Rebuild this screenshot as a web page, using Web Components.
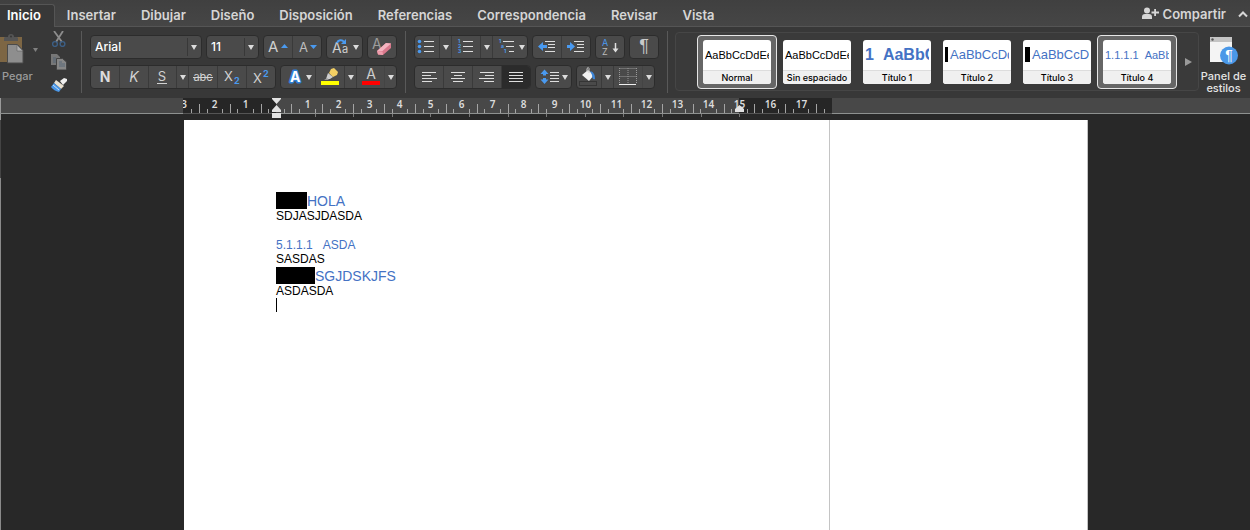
<!DOCTYPE html>
<html lang="es">
<head>
<meta charset="utf-8">
<title>Documento</title>
<style>
  body {
    margin: 0;
    background: #282828;
    font-family: Inter, "Noto Sans", sans-serif;
    color: #dedede;
  }
</style>
</head>
<body>
<word-window>
  <ribbon-tabs slot="tabs">
    <ribbon-tab active>Inicio</ribbon-tab>
    <ribbon-tab>Insertar</ribbon-tab>
    <ribbon-tab>Dibujar</ribbon-tab>
    <ribbon-tab>Diseño</ribbon-tab>
    <ribbon-tab>Disposición</ribbon-tab>
    <ribbon-tab>Referencias</ribbon-tab>
    <ribbon-tab>Correspondencia</ribbon-tab>
    <ribbon-tab>Revisar</ribbon-tab>
    <ribbon-tab>Vista</ribbon-tab>
    <share-button slot="end">Compartir</share-button>
  </ribbon-tabs>

  <clipboard-tools slot="ribbon"></clipboard-tools>

  <ribbon-section slot="ribbon">
    <tool-row>
      <font-select size="wide" label="Fuente" value="Arial"></font-select>
      <font-select size="small" label="Tamaño" value="11"></font-select>
      <tool-group>
        <tool-button icon="grow" label="Aumentar tamaño"></tool-button>
        <tool-button icon="shrink" label="Disminuir tamaño"></tool-button>
      </tool-group>
      <tool-group><tool-button icon="case" label="Mayúsculas"></tool-button></tool-group>
      <tool-group><tool-button icon="eraser" label="Borrar formato"></tool-button></tool-group>
    </tool-row>
    <tool-row>
      <tool-group>
        <tool-button icon="bold" label="Negrita"></tool-button>
        <tool-button icon="italic" label="Cursiva"></tool-button>
        <tool-button icon="underline" label="Subrayado"></tool-button>
        <tool-button icon="arrow" label="Más subrayados"></tool-button>
        <tool-button icon="strike" label="Tachado"></tool-button>
        <tool-button icon="sub" label="Subíndice"></tool-button>
        <tool-button icon="sup" label="Superíndice"></tool-button>
      </tool-group>
      <tool-group>
        <tool-button icon="effects" label="Efectos de texto"></tool-button>
        <tool-button icon="highlight" label="Resaltado"></tool-button>
        <tool-button icon="arrow" label="Color de resaltado"></tool-button>
        <tool-button icon="color" label="Color de fuente"></tool-button>
        <tool-button icon="arrow" flat label="Más colores"></tool-button>
      </tool-group>
    </tool-row>
  </ribbon-section>

  <ribbon-section slot="ribbon">
    <tool-row>
      <tool-group>
        <tool-button icon="bullets" label="Viñetas"></tool-button>
        <tool-button icon="arrow" label="Más viñetas"></tool-button>
        <tool-button icon="numbers" label="Numeración"></tool-button>
        <tool-button icon="arrow" label="Más numeración"></tool-button>
        <tool-button icon="levels" label="Lista multinivel"></tool-button>
      </tool-group>
      <tool-group>
        <tool-button icon="outdent" label="Reducir sangría"></tool-button>
        <tool-button icon="indent" label="Aumentar sangría"></tool-button>
      </tool-group>
      <tool-group><tool-button icon="sort" label="Ordenar"></tool-button></tool-group>
      <tool-group><tool-button icon="pilcrow" label="Mostrar todo"></tool-button></tool-group>
    </tool-row>
    <tool-row>
      <tool-group>
        <tool-button icon="left" label="Alinear a la izquierda"></tool-button>
        <tool-button icon="center" label="Centrar"></tool-button>
        <tool-button icon="right" label="Alinear a la derecha"></tool-button>
        <tool-button icon="justify" pressed label="Justificar"></tool-button>
      </tool-group>
      <tool-group><tool-button icon="spacing" label="Interlineado"></tool-button></tool-group>
      <tool-group>
        <tool-button icon="fill" label="Sombreado"></tool-button>
        <tool-button icon="arrow" label="Más sombreados"></tool-button>
        <tool-button icon="borders" label="Bordes"></tool-button>
        <tool-button icon="arrow" flat label="Más bordes"></tool-button>
      </tool-group>
    </tool-row>
  </ribbon-section>

  <style-gallery slot="ribbon">
    <style-card name="Normal" selected>AaBbCcDdEe</style-card>
    <style-card name="Sin espaciado">AaBbCcDdEe</style-card>
    <style-card name="Título 1" look="title" number="1">AaBbCc</style-card>
    <style-card name="Título 2" look="heading" bar="thin">AaBbCcDdEe</style-card>
    <style-card name="Título 3" look="heading" bar="thick">AaBbCcD</style-card>
    <style-card name="Título 4" look="minor" number="1.1.1.1" selected>AaBbCc</style-card>
  </style-gallery>

  <styles-pane slot="ribbon">Panel de estilos</styles-pane>

  <doc-ruler slot="ruler"></doc-ruler>

  <doc-page slot="page">
    <doc-line kind="heading" block="short">HOLA</doc-line>
    <doc-line>SDJASJDASDA</doc-line>
    <doc-line></doc-line>
    <doc-line kind="minor" number="5.1.1.1">ASDA</doc-line>
    <doc-line>SASDAS</doc-line>
    <doc-line kind="heading" block="long">SGJDSKJFS</doc-line>
    <doc-line>ASDASDA</doc-line>
    <doc-line caret></doc-line>
  </doc-page>
</word-window>

<script>
const down = (x, y) => `<path d="M${x} ${y}h6l-3 5z" fill="#dcdcdc"/>`;
const lines = (rows) => rows.map(([x, y, w]) => `<path d="M${x} ${y + 0.5}h${w}" stroke="#dedede"/>`).join("");

// every toolbar glyph is [width, markup], 22px high
const ICONS = {
  arrow: [11, down(3, 9)],
  grow: [28, `<text x="4" y="16" font-size="15" fill="#cfcfcf">A</text><path d="M17 12h7l-3.500-4z" fill="#4a9af0"/>`],
  shrink: [28, `<text x="6" y="16" font-size="13" fill="#bdbdbd">A</text><path d="M17 9h7l-3.500 4z" fill="#4a9af0"/>`],
  case: [35, `<text x="5" y="17" font-size="14" fill="#cfcfcf">A</text><text x="15" y="17" font-size="11" fill="#cfcfcf">a</text>
    <path d="M10 7c1-3 5-4 7-1" fill="none" stroke="#4a9af0" stroke-width="2"/><path d="M14 8h5V3z" fill="#4a9af0"/>${down(26, 9)}`],
  eraser: [28, `<text x="4" y="13" font-size="14" fill="#9c9c9c">A</text>
    <path d="M9 15l9-8 5 .5v4.500l-8 7-5-.5z" fill="#d9788c"/><path d="M9 15l9-8 5 .5-8.500 7.500z" fill="#f4b4c0"/><path d="M9 15l5.500.5.5 3.500-5-.5z" fill="#ee9dac"/>`],
  bold: [28, `<text x="14" y="16" font-size="14" font-weight="700" text-anchor="middle" fill="#dcdcdc">N</text>`],
  italic: [28, `<text x="14" y="16" font-size="14" font-style="italic" text-anchor="middle" fill="#d2d2d2">K</text>`],
  underline: [27, `<text x="13" y="15" font-size="13" text-anchor="middle" fill="#d2d2d2">S</text><path d="M8 17.500h10" stroke="#d2d2d2"/>`],
  strike: [28, `<text x="14" y="15" font-size="11" text-anchor="middle" fill="#d2d2d2">abc</text><path d="M4 11.500h20" stroke="#d2d2d2"/>`],
  sub: [28, `<text x="6" y="15" font-size="13" fill="#d2d2d2">X</text><text x="16" y="18" font-size="9" font-weight="700" fill="#4a9af0">2</text>`],
  sup: [28, `<text x="6" y="17" font-size="13" fill="#d2d2d2">X</text><text x="16" y="11" font-size="9" font-weight="700" fill="#4a9af0">2</text>`],
  effects: [34, `<text x="9" y="16" font-size="14" font-weight="700" stroke="#2d7fd6" stroke-width="3" stroke-linejoin="round" fill="#2d7fd6">A</text>
    <text x="9" y="16" font-size="14" font-weight="700" fill="#fff">A</text>${down(25, 9)}`],
  highlight: [28, `<path d="M15 3l3-1 4 4-1 3-4 2-4-4z" fill="#f3cf63"/><path d="M12 7l5 4-3 2h-4z" fill="#cfcfcf"/><path d="M8 14l3-2 2 2z" fill="#999"/>
    <rect x="5" y="15" width="18" height="4" fill="#ffff00"/>`],
  color: [27, `<text x="14" y="13" font-size="14" text-anchor="middle" fill="#cfcfcf">A</text><rect x="5" y="15" width="18" height="4" fill="#f00"/>`],
  bullets: [24, `<g fill="#4a9af0"><circle cx="4.500" cy="5.500" r="1.800"/><circle cx="4.500" cy="10.500" r="1.800"/><circle cx="4.500" cy="15.500" r="1.800"/></g>${lines([[9, 5, 10], [9, 10, 10], [9, 15, 10]])}`],
  numbers: [28, `<g fill="#4a9af0" font-size="5" font-weight="700"><text x="6" y="7">1</text><text x="6" y="12">2</text><text x="6" y="17">3</text></g>${lines([[11, 5, 10], [11, 10, 10], [11, 15, 10]])}`],
  levels: [34, `<g fill="#4a9af0" font-size="5" font-weight="700"><text x="6" y="7">1</text><text x="8" y="12">a</text><text x="11" y="17">1</text></g>${lines([[10, 5, 11], [13, 10, 8], [16, 15, 5]])}${down(26, 9)}`],
  outdent: [28, `<path d="M5 10.500l5-4.500v3h4v3h-4v3z" fill="#4a9af0"/>${lines([[12, 5, 10], [15, 8, 7], [15, 11, 7], [12, 15, 10]])}`],
  indent: [28, `<path d="M13 10.500L8 6v3H5v3h3v3z" fill="#4a9af0"/>${lines([[12, 5, 10], [15, 8, 7], [15, 11, 7], [12, 15, 10]])}`],
  sort: [28, `<text x="6" y="10" font-size="9" fill="#4a9af0">A</text><text x="6" y="19" font-size="9" fill="#bdbdbd">Z</text><path d="M19.500 7v8" stroke="#dedede" stroke-width="1.500"/><path d="M16.500 12.500h6l-3 4z" fill="#dedede"/>`],
  pilcrow: [28, `<text x="14" y="16" font-family="Liberation Sans" font-size="18" text-anchor="middle" fill="#c8c8c8">¶</text>`],
  left: [28, lines([[7, 6, 14], [7, 9, 9], [7, 12, 15], [7, 15, 10]])],
  center: [28, lines([[7, 6, 14], [10, 9, 8], [7, 12, 14], [9, 15, 10]])],
  right: [28, lines([[7, 6, 14], [12, 9, 9], [6, 12, 15], [11, 15, 10]])],
  justify: [28, lines([[7, 6, 14], [7, 9, 14], [7, 12, 14], [7, 15, 14]])],
  spacing: [35, `<path d="M8.500 3.500l4 4.500h-2.500v1.500h-3V8H4.500zM8.500 18l4-4.500h-2.500V12h-3v1.500H4.500z" fill="#4a9af0"/>${lines([[14, 6, 9], [14, 9, 9], [14, 12, 9], [14, 15, 9]])}${down(26, 9)}`],
  fill: [24, `<path d="M5 9l6-5 6 5-5 6z" fill="#f2f2f2"/><path d="M13 5c4 1 5 4 5 8-2 1-3-1-3-4z" fill="#3d86d8"/><path d="M10 6V2.500q1.500-2 2 0V7" fill="none" stroke="#ccc"/><rect x="2.500" y="15.500" width="17" height="4" fill="none" stroke="#353535"/>`],
  borders: [28, `<path d="M5.500 2.500h17M5.500 10.500h17M5.500 2v16M14 2v16M22.500 2v16" fill="none" stroke="#999" stroke-dasharray="1 1"/><path d="M5 18.500h17" stroke="#eee"/>`],
};

class Base extends HTMLElement {
  constructor() {
    super();
    this.shadow = this.attachShadow({ mode: "open" });
  }

  connectedCallback() {
    this.shadow.innerHTML = `<style>* { box-sizing: border-box; }${this.renderStyle()}</style>${this.renderHTML()}`;
  }

  renderStyle() { return ""; }
  renderHTML() { return "<slot></slot>"; }
}

customElements.define("word-window", class extends Base {
  renderStyle() {
    return `
      :host { display: flex; flex-direction: column; min-height: 100vh; }
      .ribbon {
        display: flex;
        height: 71px;
        background: #383838;
      }
      main {
        flex: 1;
        display: flex;
        padding: 6px 162px 0 184px;
        background: linear-gradient(#999 6px, #444 6px 64px, #8a8a8a 64px) 0 0 / 1px 100% no-repeat;
      }
      ::slotted(doc-page) { flex: 1; }
    `;
  }
  renderHTML() {
    return `
      <slot name="tabs"></slot>
      <div class="ribbon"><slot name="ribbon"></slot></div>
      <slot name="ruler"></slot>
      <main><slot name="page"></slot></main>
    `;
  }
});

customElements.define("ribbon-tabs", class extends Base {
  renderStyle() {
    return `
      :host {
        display: flex;
        justify-content: space-between;
        height: 27px;
        background: linear-gradient(#404040, #464646);
        box-shadow: inset 0 -1px #555;
      }
      nav { display: flex; padding-top: 4px; }
    `;
  }
  renderHTML() {
    return `<nav><slot></slot></nav><slot name="end"></slot>`;
  }
});

customElements.define("ribbon-tab", class extends Base {
  renderStyle() {
    return `
      :host { display: block; }
      button {
        display: block;
        height: 23px;
        padding: 0 13px 2px 12px;
        border: 0;
        background: none;
        color: #d6d6d6;
        font: 600 13px/20px Inter, sans-serif;
      }
      :host([active]) button {
        padding: 0 13px 2px 7px;
        background: #383838;
        color: #fff;
        border: solid #555;
        border-width: 1px 1px 0 0;
        border-radius: 0 3px 0 0;
      }
    `;
  }
  renderHTML() {
    return `<button type="button"><slot></slot></button>`;
  }
});

customElements.define("share-button", class extends Base {
  renderStyle() {
    return `
      :host { display: flex; align-items: center; }
      button {
        display: flex;
        align-items: center;
        gap: 4px;
        height: 27px;
        padding: 0 0 0 4px;
        border: 0;
        background: none;
        color: #d6d6d6;
        font: 600 13px/16px Inter, sans-serif;
      }
      .fold { padding: 0 2px 0 12px; }
    `;
  }
  renderHTML() {
    return `
      <button type="button">
        <svg width="17" height="13" viewBox="0 0 17 13" fill="#d6d6d6"><circle cx="5" cy="3.500" r="3"/><path d="M0 12V10q0-3 3-3h4q3 0 3 3v2zM12.200 2h1.800v2.600h3v1.800h-3V9h-1.800V6.400H9.500V4.600h2.700z"/></svg>
        <slot></slot>
      </button>
      <button type="button" class="fold" aria-label="Contraer">
        <svg width="10" height="8" viewBox="0 0 10 8" fill="none" stroke="#d6d6d6" stroke-width="2"><path d="M1 6.500l4-4 4 4"/></svg>
      </button>
    `;
  }
});

customElements.define("clipboard-tools", class extends Base {
  renderStyle() {
    return `
      :host {
        display: flex;
        flex: none;
        width: 82px;
        padding-top: 4px;
      }
      button { display: flex; padding: 0; border: 0; background: none; color: #9b9b9b; font: 500 11px/16px Inter, sans-serif; }
      .paste { flex-direction: column; align-items: flex-start; width: 51px; gap: 4px; padding-top: 3px; }
      .paste span { padding-left: 2px; }
      .side { display: flex; flex-direction: column; gap: 7px; }
      .line { margin-left: auto; width: 1px; height: 62px; background: #595959; }
    `;
  }
  renderHTML() {
    return `
      <button type="button" class="paste">
        <svg width="40" height="30" viewBox="0 0 40 30">
          <path d="M0 3h22v25H0z" fill="#7d6644"/><path d="M4 7V4q0-1 2-1h2q0-3 3-3t3 3h2q2 0 2 1v3z" fill="#555"/><circle cx="11" cy="2.500" r="1" fill="#383838"/>
          <path d="M7.500 10.500h10l5.500 6V29H7.500z" fill="#8e8e8e" stroke="#4b4b4b"/><path d="M17 11v6h6z" fill="#b0b0b0" stroke="#555" stroke-width=".5"/>
          <path d="M33 14h5l-2.500 4z" fill="#808080"/>
        </svg>
        <span>Pegar</span>
      </button>
      <div class="side">
        <button type="button" aria-label="Cortar">
          <svg width="17" height="16" viewBox="0 0 17 16" fill="none"><path d="M3 0l8 11M12 0L5 11" stroke="#8d8d8d" stroke-width="1.800"/><circle cx="4" cy="13" r="2.400" stroke="#3c5f86" stroke-width="1.400"/><circle cx="11.500" cy="13" r="2.400" stroke="#3c5f86" stroke-width="1.400"/></svg>
        </button>
        <button type="button" aria-label="Copiar">
          <svg width="17" height="16" viewBox="0 0 17 16"><path d="M0 0h6l3 3v8H0z" fill="#777"/><path d="M5.500 4.500h6l4 3.500v8h-10z" fill="#868686" stroke="#444"/><path d="M2 4h3M2 6h3M2 8h3M8 8h3M8 10h6M8 12h6" stroke="#4c6075" stroke-width=".8"/></svg>
        </button>
        <button type="button" aria-label="Copiar formato">
          <svg width="17" height="16" viewBox="0 0 17 16"><path d="M9 4l4-3 3 1v2l-4 4z" fill="#efefef"/><path d="M5 3l8 6-3 3-7-6z" fill="#e8e0d0"/><path d="M3 6l7 6-2 3Q3 14 0 10z" fill="#4a96e6"/><path d="M2 8l6 5" stroke="#c6e0fa"/></svg>
        </button>
      </div>
      <div class="line"></div>
    `;
  }
});

customElements.define("ribbon-section", class extends Base {
  renderStyle() {
    return `
      :host { display: flex; flex: none; gap: 8px; padding: 4px 0 0 8px; }
      .rows { display: flex; flex-direction: column; gap: 6px; padding-top: 4px; }
      .line { width: 1px; height: 62px; background: #595959; }
    `;
  }
  renderHTML() {
    return `<div class="rows"><slot></slot></div><div class="line"></div>`;
  }
});

customElements.define("tool-row", class extends Base {
  renderStyle() {
    return `:host { display: flex; gap: 4px; height: 24px; }`;
  }
});

customElements.define("tool-group", class extends Base {
  renderStyle() {
    return `
      :host {
        display: flex;
        box-sizing: border-box;
        height: 24px;
        border: 1px solid #2c2c2c;
        border-radius: 4px;
        background: #4a4a4a;
        overflow: hidden;
      }
    `;
  }
});

customElements.define("tool-button", class extends Base {
  renderStyle() {
    return `
      :host { display: block; }
      :host(:not(:first-child)) { border-left: 1px solid #3a3a3a; }
      :host([flat]) { border-color: #444; }
      :host([pressed]) { background: #2b2b2b; }
      button { display: block; height: 22px; padding: 0; border: 0; background: none; }
      svg { display: block; font-family: Inter, sans-serif; }
    `;
  }
  renderHTML() {
    const [width, art] = ICONS[this.getAttribute("icon")];
    return `
      <button type="button" aria-label="${this.getAttribute("label")}">
        <svg width="${width}" height="22" viewBox="0 0 ${width} 22">${art}</svg>
      </button>
    `;
  }
});

customElements.define("font-select", class extends Base {
  renderStyle() {
    return `
      :host {
        display: grid;
        box-sizing: border-box;
        width: 112px;
        height: 24px;
        border: 1px solid #2c2c2c;
        border-radius: 4px;
        background: #4a4a4a;
      }
      :host([size="small"]) { width: 53px; }
      select {
        grid-area: 1 / 1;
        appearance: none;
        width: 100%;
        padding: 0 14px 0 4px;
        border: 0;
        background: none;
        color: #fff;
        font: 500 12px/22px Inter, sans-serif;
      }
      svg { grid-area: 1 / 1; justify-self: end; pointer-events: none; }
    `;
  }
  renderHTML() {
    const label = this.getAttribute("label");
    return `
      <select aria-label="${label}"><option>${this.getAttribute("value")}</option></select>
      <svg width="14" height="22" viewBox="0 0 14 22"><path d="M.5 2v18" stroke="#383838"/>${down(4, 9)}</svg>
    `;
  }
});

customElements.define("style-gallery", class extends Base {
  renderStyle() {
    return `
      :host {
        display: flex;
        flex: 1;
        align-items: center;
        height: 59px;
        margin: 5px 0 0 7px;
        padding-left: 21px;
        box-sizing: border-box;
        border: 1px solid #464646;
        border-radius: 4px;
        background: #3a3a3a;
      }
      button { margin-left: auto; padding: 0 6px; border: 0; background: none; }
      svg { display: block; }
    `;
  }
  renderHTML() {
    return `
      <slot></slot>
      <button type="button" aria-label="Más estilos"><svg width="7" height="8" viewBox="0 0 7 8"><path d="M0 0l7 4-7 4z" fill="#9a9a9a"/></svg></button>
    `;
  }
});

customElements.define("style-card", class extends Base {
  renderStyle() {
    return `
      :host { display: block; flex: none; }
      button {
        display: block;
        width: 80px;
        height: 54px;
        padding: 4px 5px;
        border: 1px solid transparent;
        border-radius: 4px;
        background: none;
        color: #000;
      }
      :host([selected]) button { border-color: #e6e6e6; background: #666; }
      .card {
        display: flex;
        flex-direction: column;
        height: 44px;
        border-radius: 3px;
        background: #fff;
        overflow: hidden;
      }
      .sample {
        display: flex;
        align-items: center;
        height: 30px;
        margin: 0 2px;
        overflow: hidden;
        white-space: nowrap;
        font: 11px/16px "Liberation Sans", sans-serif;
      }
      .name {
        height: 14px;
        border-top: 1px solid #ddd;
        background: #f0f0f0;
        font: 500 9px/14px Inter, sans-serif;
        white-space: nowrap;
        text-align: center;
      }
      :host([look]) .sample { color: #4472c4; }
      :host([look="title"]) .sample { font-size: 16px; font-weight: 700; gap: 9px; }
      :host([look="heading"]) .sample { font-size: 13px; gap: 2px; }
      :host([look="minor"]) .sample { gap: 6px; }
      i { flex: none; width: 3px; height: 15px; background: #000; }
      :host([bar="thick"]) i { width: 5px; }
    `;
  }
  renderHTML() {
    const number = this.getAttribute("number");
    return `
      <button type="button">
        <div class="card">
          <div class="sample">${this.hasAttribute("bar") ? "<i></i>" : ""}${number ? `<span>${number}</span>` : ""}<span><slot></slot></span></div>
          <div class="name">${this.getAttribute("name")}</div>
        </div>
      </button>
    `;
  }
});

customElements.define("styles-pane", class extends Base {
  renderStyle() {
    return `
      :host { display: block; flex: none; width: 51px; }
      button {
        display: flex;
        flex-direction: column;
        align-items: center;
        width: 100%;
        padding: 9px 2px 0 0;
        border: 0;
        background: none;
        color: #e4e4e4;
        font: 500 11px/12px Inter, sans-serif;
      }
      svg { margin-bottom: 5px; }
    `;
  }
  renderHTML() {
    return `
      <button type="button">
        <svg width="28" height="29" viewBox="0 0 28 29">
          <path d="M0 1h22v25H0z" fill="#f4f4f4"/><path d="M0 1h22v5H0z" fill="#c4c4c4"/><circle cx="2.500" cy="3.500" r="1.200" fill="#555"/>
          <circle cx="19" cy="19.500" r="9" fill="#4a98e8"/><text x="19" y="24" font-family="Liberation Sans" font-size="14" text-anchor="middle" fill="#fff">¶</text>
        </svg>
        <slot></slot>
      </button>
    `;
  }
});

customElements.define("doc-ruler", class extends Base {
  renderStyle() {
    return `
      :host {
        display: block;
        box-sizing: border-box;
        height: 16px;
        border-bottom: 1px solid #8e9190;
        background: #484848;
        box-shadow: inset 1px 0 #999;
      }
      svg { display: block; overflow: visible; }
    `;
  }
  renderHTML() {
    const zero = 276;
    const cm = 463 / 15;
    let marks = "";
    for (let q = -11; q <= 71; q++) {
      const x = Math.round(zero + q * cm / 4) + 0.5;
      if (q % 4 === 0) {
        const n = Math.abs(q / 4);
        if (n) marks += `<text x="${x}" y="10">${n}</text>`;
      } else {
        marks += `<path d="M${x} ${q % 2 ? 11 : 6}V15" stroke="#a4a4a4"/>`;
      }
    }
    // default tab stops hang below the baseline
    for (let x = 314.500; x < 740; x += 38.600) {
      marks += `<path d="M${Math.round(x) + 0.5} 16v3" stroke="#777"/>`;
    }
    return `
      <svg width="832" height="15" viewBox="0 0 832 15" font-family="Noto Sans" font-size="10" font-weight="600" fill="#dcdcdc" text-anchor="middle">
        <clipPath id="edge"><rect x="183" width="20" height="15"/></clipPath>
        <rect x="183" width="93" height="15" fill="#262626"/>
        <rect x="739" width="93" height="15" fill="#262626"/>
        <path d="M183 15.500h93M739 15.500h93" stroke="#555"/>
        <text x="184" y="10" clip-path="url(#edge)">3</text>
        ${marks}
        <path d="M272 0h9v1l-4.500 5-4.500-5zM272 14v-2l4.500-5 4.500 5v2zM272 15h9v5h-9zM735 14v-3l4.500-4 4.500 4v3z" fill="#e2e2e2"/>
      </svg>
    `;
  }
});

customElements.define("doc-page", class extends Base {
  renderStyle() {
    return `
      :host { display: grid; grid-template-columns: 1fr 259px; background: #fff; color: #000; }
      .text { padding: 71px 92px; }
      .margin { border: solid #c4c4c4; border-width: 0 1px; }
    `;
  }
  renderHTML() {
    return `<div class="text"><slot></slot></div><div class="margin"></div>`;
  }
});

customElements.define("doc-line", class extends Base {
  renderStyle() {
    return `
      :host {
        display: flex;
        height: 14px;
        font: 12px/14px "Liberation Sans", Arial, sans-serif;
      }
      :host([kind]) { color: #4472c4; }
      :host([kind="heading"]) { height: 17px; margin-top: 1px; font-size: 14px; line-height: 18px; }
      :host([kind="minor"]) { height: 15px; gap: 10px; line-height: 16px; }
      i { width: 31px; background: #000; }
      :host([block="long"]) i { width: 39px; }
      b { width: 1px; background: #000; }
    `;
  }
  renderHTML() {
    const number = this.getAttribute("number");
    return `
      ${this.hasAttribute("block") ? "<i></i>" : ""}
      ${number ? `<span>${number}</span>` : ""}
      <span><slot></slot></span>
      ${this.hasAttribute("caret") ? "<b></b>" : ""}
    `;
  }
});
</script>
</body>
</html>
